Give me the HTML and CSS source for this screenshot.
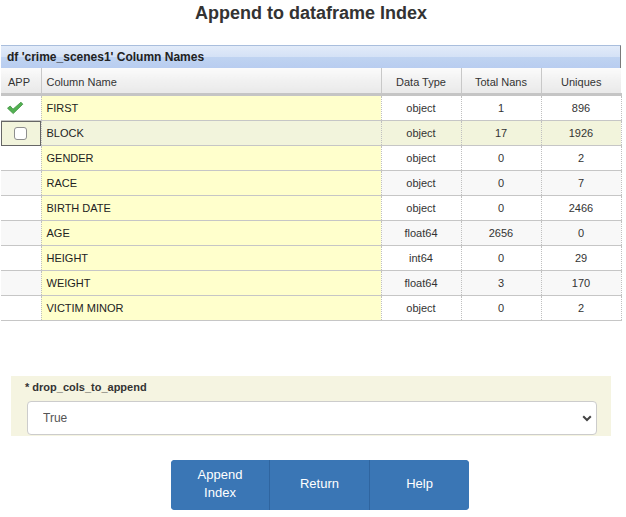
FILE: index.html
```html
<!DOCTYPE html>
<html>
<head>
<meta charset="utf-8">
<link rel="stylesheet" href="styles.css">
</head>
<body>
<h1 class="title">Append to dataframe Index</h1>
<div class="grid">
  <div class="grid-title">df 'crime_scenes1' Column Names</div>
  <table class="cols">
    <colgroup>
      <col class="c-app"><col class="c-name"><col class="c-num"><col class="c-num"><col class="c-num">
    </colgroup>
    <thead>
      <tr>
        <th class="h-app">APP</th>
        <th class="h-name">Column Name</th>
        <th>Data Type</th>
        <th>Total Nans</th>
        <th>Uniques</th>
      </tr>
    </thead>
    <tbody>
      <tr>
        <td class="app"><svg class="check" width="18" height="14" viewBox="0 0 18 14"><path d="M1.5 7.2 L4.2 5 L7 8.2 L15 1.2 L16.8 3.2 L7.2 12.6 Z" fill="#52b152" stroke="#3c8f3c" stroke-width="0.8" stroke-linejoin="round"/></svg></td>
        <td class="name">FIRST</td><td>object</td><td>1</td><td>896</td>
      </tr>
      <tr class="sel">
        <td class="app focus"><span class="box"></span></td>
        <td class="name">BLOCK</td><td>object</td><td>17</td><td>1926</td>
      </tr>
      <tr>
        <td class="app"></td>
        <td class="name">GENDER</td><td>object</td><td>0</td><td>2</td>
      </tr>
      <tr class="alt">
        <td class="app"></td>
        <td class="name">RACE</td><td>object</td><td>0</td><td>7</td>
      </tr>
      <tr>
        <td class="app"></td>
        <td class="name">BIRTH DATE</td><td>object</td><td>0</td><td>2466</td>
      </tr>
      <tr class="alt">
        <td class="app"></td>
        <td class="name">AGE</td><td>float64</td><td>2656</td><td>0</td>
      </tr>
      <tr>
        <td class="app"></td>
        <td class="name">HEIGHT</td><td>int64</td><td>0</td><td>29</td>
      </tr>
      <tr class="alt">
        <td class="app"></td>
        <td class="name">WEIGHT</td><td>float64</td><td>3</td><td>170</td>
      </tr>
      <tr>
        <td class="app"></td>
        <td class="name">VICTIM MINOR</td><td>object</td><td>0</td><td>2</td>
      </tr>
    </tbody>
  </table>
</div>

<div class="form">
  <label class="lbl">* drop_cols_to_append</label>
  <div class="select-wrap">
    <select class="sel-box"><option>True</option><option>False</option></select>
    <svg class="chev" width="10" height="7" viewBox="0 0 10 7"><path d="M1.2 1.2 L5 5 L8.8 1.2" fill="none" stroke="#444" stroke-width="2"/></svg>
  </div>
</div>

<div class="actions">
  <div class="btn-group">
    <button class="btn">Append<br>Index</button>
    <button class="btn mid">Return</button>
    <button class="btn">Help</button>
  </div>
</div>
</body>
</html>
```

FILE: styles.css
```css
html, body {
  margin: 0;
  padding: 0;
  background: #fff;
  font-family: "Liberation Sans", Arial, sans-serif;
  color: #333;
}

.title {
  margin: 0 0 20px 0;
  padding-top: 1px;
  font-size: 18px;
  line-height: 24px;
  font-weight: bold;
  text-align: center;
  color: #333;
  padding-right: 4px;
}

.grid {
  margin-left: 1px;
  width: 620px;
}

.grid-title {
  height: 23px;
  line-height: 23px;
  box-sizing: border-box;
  padding-left: 6px;
  font-size: 12px;
  font-weight: bold;
  color: #222;
  border-top: 1px solid #a9bedd;
  border-right: 1px solid #7a7a7a;
  background: linear-gradient(#e2ebf9 0%, #d5e2f6 48%, #bfd3f1 52%, #b8cdf0 100%);
}

.cols {
  width: 620px;
  border-collapse: collapse;
  table-layout: fixed;
  font-size: 11px;
}

.c-app { width: 40px; }
.c-name { width: 340px; }
.c-num { width: 80px; }

thead th {
  height: 23px;
  padding: 2px 0 0 0;
  font-weight: normal;
  font-size: 11px;
  color: #333;
  text-align: center;
  background: linear-gradient(#fbfbfb 0%, #f1f1f1 50%, #e9e9e9 100%);
  border-left: 1px solid #c8c8c8;
  border-bottom: 3px solid #c5c5c5;
}

thead th.h-app {
  text-align: left;
  padding-left: 7px;
  border-left: none;
}

thead th.h-name {
  text-align: left;
  padding-left: 5px;
}

tbody td {
  height: 24px;
  padding: 0;
  text-align: center;
  color: #333;
  border-bottom: 1px solid #c6c6c6;
  border-left: 1px dotted #c0c0c0;
  border-right: 1px dotted #c0c0c0;
}

tbody td.app {
  border-left: none;
  position: relative;
}

tbody td.name {
  text-align: left;
  padding-left: 5px;
  background: #ffffcc;
  color: #222;
}

tbody tr.alt td {
  background: #f8f8f8;
}

tbody tr.alt td.name {
  background: #ffffcc;
}

tbody tr.sel td,
tbody tr.sel td.name {
  background: #f2f4dc;
}

tbody td.focus {
  outline: 1px solid #666;
  outline-offset: -1px;
}

.check {
  display: block;
  margin-left: 5px;
}

.box {
  display: block;
  width: 11px;
  height: 11px;
  margin: 0 auto;
  background: #fff;
  border: 1px solid #8e8e8e;
  border-radius: 3px;
}

.form {
  margin: 55px 15px 0 11px;
  width: 600px;
  box-sizing: border-box;
  background: #f5f4e1;
  padding: 4px 14px 1px 16px;
}

.lbl {
  display: block;
  font-size: 11px;
  font-weight: bold;
  color: #333;
  line-height: 14px;
  margin-left: -2px;
  margin-bottom: 7px;
}

.select-wrap {
  position: relative;
}

.sel-box {
  appearance: none;
  -webkit-appearance: none;
  width: 570px;
  height: 34px;
  box-sizing: border-box;
  border: 1px solid #ccc;
  border-radius: 4px;
  background: #fff;
  padding: 0 15px;
  font-family: "Liberation Sans", Arial, sans-serif;
  font-size: 12px;
  color: #555;
  display: block;
}

.chev {
  position: absolute;
  right: 5px;
  top: 14px;
}

.actions {
  display: flex;
  justify-content: flex-start;
  margin-top: 24px;
  padding-left: 171px;
}

.btn-group {
  display: flex;
  height: 50px;
  border-radius: 4px;
  overflow: hidden;
  background: #3a76b5;
}

.btn {
  width: 99px;
  height: 50px;
  border: none;
  margin: 0;
  padding: 0 0 3px 0;
  background: #3a76b5;
  color: #fff;
  font-family: "Liberation Sans", Arial, sans-serif;
  font-size: 13px;
  line-height: 18px;
  border-right: 1px solid #2f65a0;
}

.btn.mid {
  width: 100px;
}

.btn:last-child {
  border-right: none;
}
```
